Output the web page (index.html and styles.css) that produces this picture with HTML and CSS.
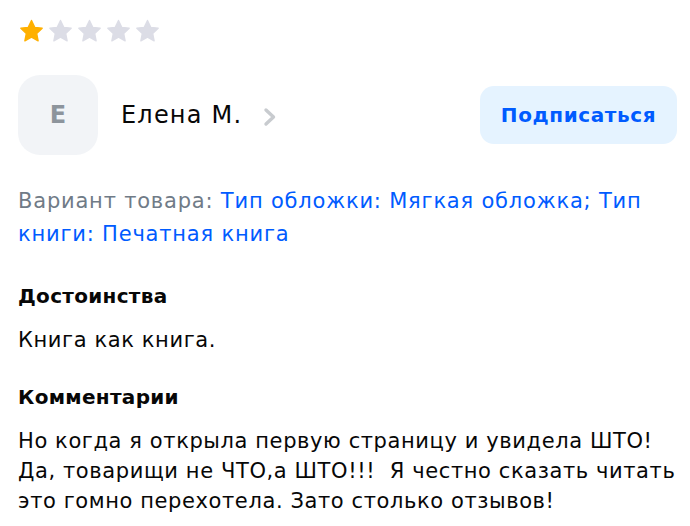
FILE: index.html
```html
<!DOCTYPE html>
<html lang="ru">
  <head>
    <meta charset="UTF-8" />
    <meta name="viewport" content="width=device-width, initial-scale=1.0" />
    <title>Отзыв</title>
    <link rel="stylesheet" href="styles.css">
  </head>
  <body>
    <div class="review">
      <div class="stars">
        <svg class="star on" viewBox="0 0 24 24"><path d="M12 2.2l2.9 6.1 6.6.8-4.9 4.6 1.3 6.6L12 17l-5.9 3.3 1.3-6.6-4.9-4.6 6.6-.8z"/></svg>
        <svg class="star" viewBox="0 0 24 24"><path d="M12 2.2l2.9 6.1 6.6.8-4.9 4.6 1.3 6.6L12 17l-5.9 3.3 1.3-6.6-4.9-4.6 6.6-.8z"/></svg>
        <svg class="star" viewBox="0 0 24 24"><path d="M12 2.2l2.9 6.1 6.6.8-4.9 4.6 1.3 6.6L12 17l-5.9 3.3 1.3-6.6-4.9-4.6 6.6-.8z"/></svg>
        <svg class="star" viewBox="0 0 24 24"><path d="M12 2.2l2.9 6.1 6.6.8-4.9 4.6 1.3 6.6L12 17l-5.9 3.3 1.3-6.6-4.9-4.6 6.6-.8z"/></svg>
        <svg class="star" viewBox="0 0 24 24"><path d="M12 2.2l2.9 6.1 6.6.8-4.9 4.6 1.3 6.6L12 17l-5.9 3.3 1.3-6.6-4.9-4.6 6.6-.8z"/></svg>
      </div>

      <div class="author">
        <div class="avatar">Е</div>
        <div class="name">Елена М.</div>
        <svg class="chev" viewBox="0 0 14 20"><path d="M3 3l7.5 7-7.5 7"/></svg>
        <button class="follow">Подписаться</button>
      </div>

      <p class="variant">Вариант товара: <span class="link">Тип обложки: Мягкая обложка; Тип книги: Печатная книга</span></p>

      <h3>Достоинства</h3>
      <p class="text">Книга как книга.</p>

      <h3>Комментарии</h3>
      <p class="text">Но когда я открыла первую страницу и увидела ШТО! Да, товарищи не ЧТО,а ШТО!!!&nbsp; Я честно сказать читать это гомно перехотела. Зато столько отзывов!</p>
    </div>
  </body>
</html>
```

FILE: styles.css
```css
body {
  margin: 0;
  background-color: #ffffff;
  color: #070707;
  font-family: "DejaVu Sans", sans-serif;
}

.review {
  padding: 18px 8px 0px 18px;
}

.stars {
  display: flex;
  gap: 2px;
}

.star {
  width: 27px;
  height: 27px;
  fill: #dcdde6;
  stroke: #dcdde6;
  stroke-width: 1.2;
  stroke-linejoin: round;
}

.star.on {
  fill: #ffb000;
  stroke: #ffb000;
}

.author {
  display: flex;
  align-items: center;
  margin-top: 30px;
}

.avatar {
  width: 80px;
  height: 80px;
  border-radius: 22px;
  background-color: #f2f4f7;
  color: #8d949c;
  font-size: 24px;
  font-weight: 700;
  display: flex;
  align-items: center;
  justify-content: center;
}

.name {
  font-size: 24px;
  letter-spacing: 1.2px;
  margin-left: 23px;
}

.chev {
  width: 14px;
  height: 20px;
  margin: 4px 0px 0px 21px;
  fill: none;
  stroke: #c8cbcf;
  stroke-width: 3.4;
  stroke-linecap: round;
  stroke-linejoin: round;
}

.follow {
  margin: 0px 5px 0px auto;
  width: 197px;
  height: 58px;
  border: none;
  border-radius: 14px;
  background-color: #e5f3ff;
  color: #005bff;
  font-family: inherit;
  font-size: 20px;
  font-weight: 700;
  letter-spacing: 0.6px;
  cursor: pointer;
}

.variant {
  margin: 30px 5px 0px 0px;
  font-size: 21px;
  letter-spacing: 0.8px;
  line-height: 33px;
  color: #707b87;
}

.link {
  color: #005bff;
}

h3 {
  font-size: 20px;
  font-weight: 700;
  letter-spacing: 0.3px;
  margin: 30px 0px 0px 0px;
  line-height: 30px;
}

.text {
  font-size: 21px;
  letter-spacing: 0.6px;
  line-height: 30px;
  margin: 14px 0px 0px 0px;
}

.text + h3 {
  margin-top: 27px;
}
```
